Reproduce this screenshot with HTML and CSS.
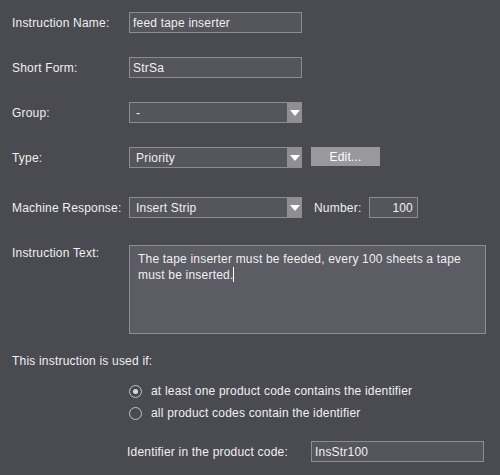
FILE: index.html
```html
<!DOCTYPE html>
<html>
<head>
<meta charset="utf-8">
<link rel="stylesheet" href="styles.css">
</head>
<body>
<div class="form">
  <div class="row r1">
    <span class="label">Instruction Name:</span>
    <div class="field input w173">feed tape inserter</div>
  </div>
  <div class="row r2">
    <span class="label">Short Form:</span>
    <div class="field input w173">StrSa</div>
  </div>
  <div class="row r3">
    <span class="label">Group:</span>
    <div class="field select w173"><span class="val">-</span><span class="arrow"></span></div>
  </div>
  <div class="row r4">
    <span class="label">Type:</span>
    <div class="field select w173"><span class="val">Priority</span><span class="arrow"></span></div>
    <div class="button">Edit...</div>
  </div>
  <div class="row r5">
    <span class="label">Machine Response:</span>
    <div class="field select w173"><span class="val">Insert Strip</span><span class="arrow"></span></div>
    <span class="numlabel">Number:</span>
    <div class="field input num">100</div>
  </div>
  <div class="row r6">
    <span class="label top">Instruction Text:</span>
    <div class="textarea">The tape inserter must be feeded, every 100 sheets a tape must be inserted.<span class="caret"></span></div>
  </div>
  <div class="used">This instruction is used if:</div>
  <div class="radios">
    <div class="radio-row"><span class="radio checked"></span><span>at least one product code contains the identifier</span></div>
    <div class="radio-row"><span class="radio"></span><span>all product codes contain the identifier</span></div>
  </div>
  <div class="ident">
    <span class="identlabel">Identifier in the product code:</span>
    <div class="field input identinput">InsStr100</div>
  </div>
</div>
</body>
</html>
```
FILE: styles.css
```css
html, body {
  margin: 0;
  padding: 0;
  background: #4a4a51;
}
body {
  width: 500px;
  height: 475px;
  overflow: hidden;
  font-family: "Liberation Sans", Arial, sans-serif;
  font-size: 12px;
  letter-spacing: 0.2px;
  color: #f0f0f2;
}
.form {
  padding-left: 12px;
  padding-top: 12px;
}
.row {
  display: flex;
  align-items: center;
  height: 21px;
}
.r2, .r3, .r4 { margin-top: 24px; }
.r5 { margin-top: 29px; }
.r6 { margin-top: 27px; align-items: flex-start; height: auto; }
.label {
  width: 117px;
  flex: none;
}
.label.top { padding-top: 1px; }
.field {
  box-sizing: border-box;
  height: 21px;
  border: 1px solid #8c8c92;
  background: #55555c;
  display: flex;
  align-items: center;
}
.w173 { width: 173px; }
.input { padding-left: 3px; }
.select { padding-left: 6px; position: relative; }
.select .val { flex: 1; }
.arrow {
  width: 15px;
  height: 21px;
  margin-top: -1px;
  margin-bottom: -1px;
  margin-right: -1px;
  background: #8e8e93;
  display: flex;
  align-items: center;
  justify-content: center;
}
.arrow::after {
  content: "";
  width: 0;
  height: 0;
  border-left: 5px solid transparent;
  border-right: 5px solid transparent;
  border-top: 6px solid #ffffff;
  margin-top: 1px;
}
.button {
  margin-left: 9px;
  width: 69px;
  height: 19px;
  margin-top: -2px;
  background: #98989d;
  color: #ffffff;
  display: flex;
  align-items: center;
  justify-content: center;
}
.numlabel {
  margin-left: 12px;
  width: 55px;
}
.num {
  width: 49px;
  justify-content: flex-end;
  padding-right: 4px;
}
.textarea {
  box-sizing: border-box;
  width: 357px;
  height: 89px;
  border: 1px solid #8e8e94;
  background: #5c5c64;
  padding: 5px 8px;
  line-height: 16px;
}
.caret {
  display: inline-block;
  width: 1px;
  height: 15px;
  background: #ffffff;
  vertical-align: -3px;
}
.used {
  margin-top: 20px;
}
.radios {
  margin-top: 16px;
  padding-left: 117px;
  display: flex;
  flex-direction: column;
  gap: 8px;
}
.radio-row {
  display: flex;
  align-items: center;
  height: 14px;
}
.radio {
  box-sizing: border-box;
  width: 13px;
  height: 13px;
  border: 1px solid #c4c4c8;
  border-radius: 50%;
  margin-right: 9px;
  display: flex;
  align-items: center;
  justify-content: center;
}
.radio.checked::after {
  content: "";
  width: 5px;
  height: 5px;
  border-radius: 50%;
  background: #d8d8dc;
}
.ident {
  margin-top: 21px;
  padding-left: 115px;
  display: flex;
  align-items: center;
}
.identlabel {
  width: 184px;
}
.identinput {
  width: 173px;
}
```
